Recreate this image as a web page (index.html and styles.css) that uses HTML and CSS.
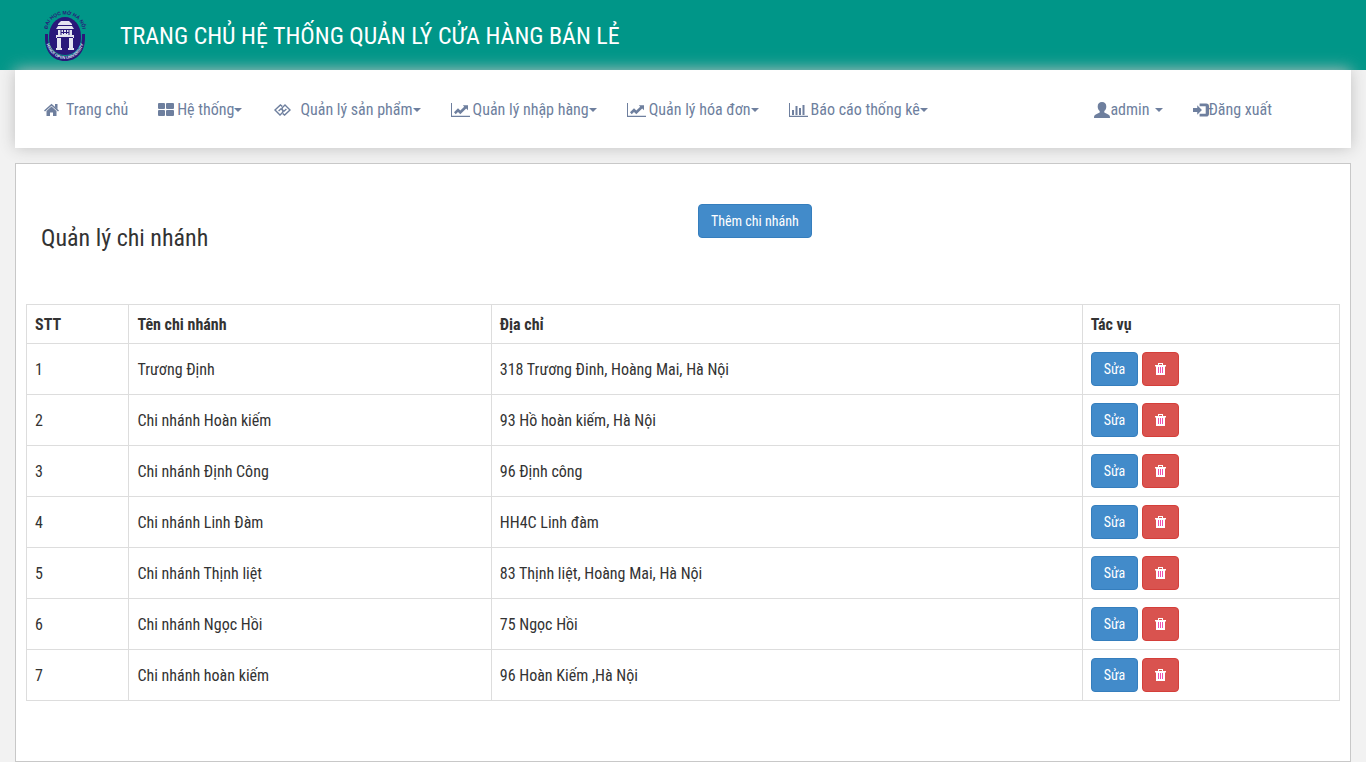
FILE: index.html
```html
<!DOCTYPE html>
<html lang="vi">
<head>
<meta charset="utf-8">
<title>Quản lý chi nhánh</title>
<link rel="stylesheet" href="styles.css">
</head>
<body>
<svg class="sprite" aria-hidden="true">
  <symbol id="i-home" viewBox="0 0 16 14"><path d="M7.500.7 15 7.400 14 8.600 7.500 2.800 1 8.600 0 7.400Z M11 1h2.500v5l-2.500-2.200Z M7.500 3.600l5 4.400V13H9V9.400H6V13H2.500V8Z"/></symbol>
  <symbol id="i-grid" viewBox="0 0 16 14"><rect x="0" y="0" width="7" height="6" rx="1"/><rect x="8" y="0" width="8" height="6" rx="1"/><rect x="0" y="7" width="7" height="6" rx="1"/><rect x="8" y="7" width="8" height="6" rx="1"/></symbol>
  <symbol id="i-link" viewBox="-2 -1 22 14"><path fill="none" stroke="currentColor" stroke-width="1.4" d="M8.200 2.400 6.400 1 1 6l5 5 2.800-2.800V6L7 4.800 4.600 7M8.800 9.600 10.600 11 16 6 11 1 8.200 3.800V6L10 7.200 12.400 5"/></symbol>
  <symbol id="i-line" viewBox="0 0 19 14"><path d="M0 0h1v12.8h18V14H0Z M3 9.3 7 5.3 9.3 7.6 13.2 3.8 11.8 2.2H17V7.2L15.2 5.6 9.3 11.2 7 8.9 4.7 11.2Z"/></symbol>
  <symbol id="i-bar" viewBox="0 0 19 14"><path d="M0 0h1v12.8h18V14H0Z M3 7h2v5H3Z M6.5 3h2v9h-2Z M10 5h2v7h-2Z M13.5 2h2v10h-2Z"/></symbol>
  <symbol id="i-user" viewBox="0 0 16 16"><path d="M8 0c2.700 0 4.300 1.600 4.300 4.400 0 2-.8 3.700-2 4.700v1.400c1.800 1 4.500 1.800 5.200 3 .4.600.5 1.500.5 2.500H0c0-1 .1-1.900.5-2.500.7-1.200 3.400-2 5.200-3V9.100c-1.200-1-2-2.700-2-4.700C3.700 1.600 5.300 0 8 0Z"/></symbol>
  <symbol id="i-login" viewBox="0 0 17 16"><path d="M0 6h4.500V3L9.500 8l-5 5v-3H0Z M7 1h7q3 0 3 3v8q0 3-3 3H7v-3h6.500V4H7Z"/></symbol>
  <symbol id="i-trash" viewBox="0 0 11 12"><path d="M3 2V0h5v2h3v1.500h-1V12H1V3.500H0V2Z"/><path class="trash-lines" d="M3 4h1v6H3ZM5 4h1v6H5ZM7 4h1v6H7Z"/><path class="trash-slot" d="M4 1h3v1H4Z"/></symbol>
</svg>

<header class="top">
  <svg class="logo" viewBox="0 0 42 52" role="img" aria-label="Hanoi Open University">
    <defs>
      <path id="arc-top" d="M3.500 20A17.500 15.500 0 0 1 38.500 20"/>
      <path id="arc-bottom" d="M1.500 27A19.500 22 0 0 0 40.500 27"/>
    </defs>
    <path fill="#29187a" d="M1 24h3v3h34v-3h3v4C41 42 33 51 21 51S1 42 1 28Z"/>
    <ellipse cx="21" cy="26" rx="16" ry="19" fill="#29187a"/>
    <path fill="none" stroke="#079688" stroke-width="1" d="M4.500 23v5C4.500 39 12 45.500 21 45.500S37.500 39 37.500 28v-5"/>
    <path fill="#e4e4f0" d="M17 11h8l3 3v2l2 3h-2v6h2v3h-1v11h-4V28h-8v11h-4V28h-1v-3h2v-6h-2l2-3v-2Z"/>
    <path fill="none" stroke="#29187a" stroke-width="1" d="M13 15.500h16M14 19.500h14M17 20v5M25 20v5M19.500 20v4M22.500 20v4M17 22.500h8M13 27.500h16"/>
    <path fill="#e4e4f0" d="M12 38h6v2h-6ZM24 38h6v2h-6Z"/>
    <text class="seal seal-top"><textPath href="#arc-top" startOffset="50%">ĐẠI HỌC MỞ HÀ NỘI</textPath></text>
    <text class="seal seal-bottom"><textPath href="#arc-bottom" startOffset="50%">HANOI OPEN UNIVERSITY</textPath></text>
  </svg>
  <h1 class="top-title">TRANG CHỦ HỆ THỐNG QUẢN LÝ CỬA HÀNG BÁN LẺ</h1>
</header>

<nav class="nav">
  <ul class="menu">
    <li><a class="spaced" href="#"><svg class="icon"><use href="#i-home"/></svg>Trang chủ</a></li>
    <li><a href="#"><svg class="icon"><use href="#i-grid"/></svg>Hệ thống<span class="caret"></span></a></li>
    <li><a class="spaced" href="#"><svg class="icon link"><use href="#i-link"/></svg>Quản lý sản phẩm<span class="caret"></span></a></li>
    <li><a href="#"><svg class="icon wide"><use href="#i-line"/></svg>Quản lý nhập hàng<span class="caret"></span></a></li>
    <li><a href="#"><svg class="icon wide"><use href="#i-line"/></svg>Quản lý hóa đơn<span class="caret"></span></a></li>
    <li><a href="#"><svg class="icon wide"><use href="#i-bar"/></svg>Báo cáo thống kê<span class="caret"></span></a></li>
  </ul>
  <ul class="menu account">
    <li><a class="tight" href="#"><svg class="icon tall"><use href="#i-user"/></svg>admin <span class="caret apart"></span></a></li>
    <li><a class="tight" href="#"><svg class="icon tall"><use href="#i-login"/></svg>Đăng xuất</a></li>
  </ul>
</nav>

<main class="panel">
  <div class="panel-head">
    <h2 class="panel-title">Quản lý chi nhánh</h2>
    <div class="panel-action"><button class="btn primary" type="button">Thêm chi nhánh</button></div>
  </div>
  <table class="table">
    <thead>
      <tr><th class="c-no" scope="col">STT</th><th class="c-name" scope="col">Tên chi nhánh</th><th class="c-addr" scope="col">Địa chỉ</th><th scope="col">Tác vụ</th></tr>
    </thead>
    <tbody>
      <tr><td>1</td><td>Trương Định</td><td>318 Trương Đinh, Hoàng Mai, Hà Nội</td><td><div class="actions"><button class="btn primary" type="button">Sửa</button><button class="btn danger" type="button" aria-label="Xóa"><svg class="trash"><use href="#i-trash"/></svg></button></div></td></tr>
      <tr><td>2</td><td>Chi nhánh Hoàn kiếm</td><td>93 Hồ hoàn kiếm, Hà Nội</td><td><div class="actions"><button class="btn primary" type="button">Sửa</button><button class="btn danger" type="button" aria-label="Xóa"><svg class="trash"><use href="#i-trash"/></svg></button></div></td></tr>
      <tr><td>3</td><td>Chi nhánh Định Công</td><td>96 Định công</td><td><div class="actions"><button class="btn primary" type="button">Sửa</button><button class="btn danger" type="button" aria-label="Xóa"><svg class="trash"><use href="#i-trash"/></svg></button></div></td></tr>
      <tr><td>4</td><td>Chi nhánh Linh Đàm</td><td>HH4C Linh đàm</td><td><div class="actions"><button class="btn primary" type="button">Sửa</button><button class="btn danger" type="button" aria-label="Xóa"><svg class="trash"><use href="#i-trash"/></svg></button></div></td></tr>
      <tr><td>5</td><td>Chi nhánh Thịnh liệt</td><td>83 Thịnh liệt, Hoàng Mai, Hà Nội</td><td><div class="actions"><button class="btn primary" type="button">Sửa</button><button class="btn danger" type="button" aria-label="Xóa"><svg class="trash"><use href="#i-trash"/></svg></button></div></td></tr>
      <tr><td>6</td><td>Chi nhánh Ngọc Hồi</td><td>75 Ngọc Hồi</td><td><div class="actions"><button class="btn primary" type="button">Sửa</button><button class="btn danger" type="button" aria-label="Xóa"><svg class="trash"><use href="#i-trash"/></svg></button></div></td></tr>
      <tr><td>7</td><td>Chi nhánh hoàn kiếm</td><td>96 Hoàn Kiếm ,Hà Nội</td><td><div class="actions"><button class="btn primary" type="button">Sửa</button><button class="btn danger" type="button" aria-label="Xóa"><svg class="trash"><use href="#i-trash"/></svg></button></div></td></tr>
    </tbody>
  </table>
</main>
</body>
</html>
```
FILE: styles.css
```css
* { box-sizing: border-box; }

body {
  margin: 0;
  background: #f2f2f2;
  color: #333;
  font: 16px/22px "Roboto Condensed", "Liberation Sans Narrow", Roboto, sans-serif;
}

.sprite { display: none; }

.top {
  display: flex;
  align-items: center;
  gap: 34px;
  height: 70px;
  padding: 2px 44px 0;
  background: #009688;
  color: #fff;
}
.logo { width: 42px; height: 52px; flex: none; overflow: visible; }
.seal { font-family: "Liberation Sans", sans-serif; font-weight: 700; text-anchor: middle; }
.seal-top { font-size: 5px; fill: #29187a; }
.seal-bottom { font-size: 4px; fill: #d5e8f0; }
.top-title { margin: 0; font-size: 24px; line-height: 32px; font-weight: 400; }

.nav {
  display: flex;
  justify-content: space-between;
  align-items: center;
  min-height: 78px;
  margin: 0 15px;
  padding: 0 64px 0 14px;
  background: #fff;
  box-shadow: 0 0 15px #c0c0c0;
}
.menu { display: flex; margin: 0; padding: 0; list-style: none; }
.menu a {
  display: flex;
  align-items: center;
  padding: 12px 15px 10px;
  color: #6e7f9e;
  text-decoration: none;
  white-space: nowrap;
}
.icon { width: 16px; height: 14px; margin-right: 3px; flex: none; fill: currentColor; }
.icon.wide { width: 19px; }
.icon.link { width: 22px; }
.icon.tall { height: 16px; }
.spaced .icon { margin-right: 6px; }
.tight .icon { margin-right: 0; }
.caret {
  border-top: 4px solid;
  border-left: 4px solid transparent;
  border-right: 4px solid transparent;
}
.caret.apart { margin-left: 5px; }

.panel {
  margin: 15px 15px 0;
  padding: 40px 10px 60px;
  background: #fff;
  border: 1px solid #c8c8c8;
}
.panel-head { display: grid; grid-template-columns: 1fr 1fr; min-height: 100px; }
.panel-title { margin: 0; padding: 20px 15px; font-size: 24px; line-height: 28px; font-weight: 400; }
.panel-action { padding: 0 15px; }

.btn {
  height: 34px;
  padding: 0 12px;
  border: 1px solid;
  border-radius: 4px;
  color: #fff;
  font-family: inherit;
  font-size: 14px;
  line-height: 20px;
}
.primary { background: #428bca; border-color: #357ebd; }
.danger { background: #d9534f; border-color: #d43f3a; }
.trash { display: block; width: 11px; height: 12px; fill: #fff; }
.trash-lines { fill: #f050b0; }
.trash-slot { fill: #d9534f; }

.table { width: 100%; border-collapse: collapse; table-layout: fixed; }
.table th, .table td { padding: 9px 8px 7px; border: 1px solid #ddd; text-align: left; }
.table td:last-child { padding: 8px; }
.table th { font-weight: 700; }
.c-no { width: 7.8%; }
.c-name { width: 27.6%; }
.c-addr { width: 45%; }
.actions { display: flex; gap: 4px; }
```
